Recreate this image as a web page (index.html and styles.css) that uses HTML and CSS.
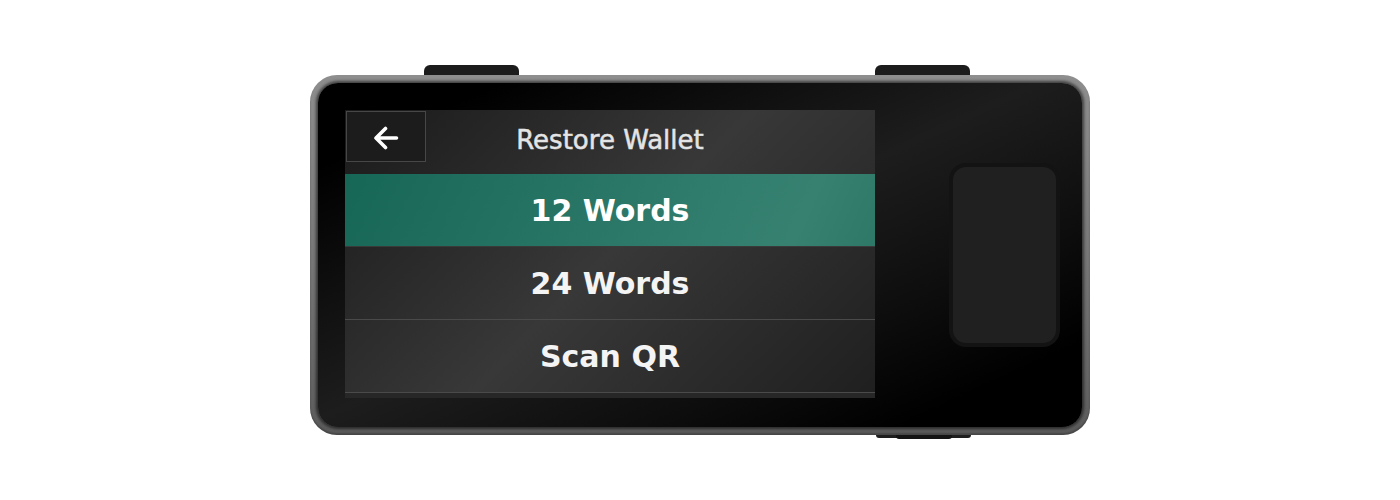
FILE: index.html
```html
<!DOCTYPE html>
<html>
<head>
<meta charset="utf-8">
<link rel="stylesheet" href="styles.css">
</head>
<body>
<div class="stage">
  <div class="device">
    <div class="top-keys">
      <div class="key"></div>
      <div class="key"></div>
    </div>
    <div class="shell">
      <div class="face">
        <div class="screen">
          <div class="header">
            <div class="back">
              <svg width="26" height="24" viewBox="0 0 26 24">
                <path d="M23.5 12 H4 M12.5 2.5 L3 12 L12.5 21.5" fill="none" stroke="#ffffff" stroke-width="3.6" stroke-linecap="round" stroke-linejoin="round"/>
              </svg>
            </div>
            <div class="title">Restore Wallet</div>
            <div></div>
          </div>
          <div class="row row-active">12 Words</div>
          <div class="row">24 Words</div>
          <div class="row">Scan QR</div>
          <div class="row-tail"></div>
        </div>
        <div class="pad"><div class="pad-inner"></div></div>
      </div>
    </div>
    <div class="bottom-keys">
      <div class="bump"><div class="bump-core"></div></div>
    </div>
  </div>
</div>
</body>
</html>
```

FILE: styles.css
```css
html, body {
  margin: 0;
  padding: 0;
  background: #ffffff;
}

.stage {
  width: 1400px;
  height: 500px;
  box-sizing: border-box;
  padding-top: 65px;
  display: flex;
  flex-direction: column;
  align-items: center;
  overflow: hidden;
}

.device {
  width: 780px;
  display: flex;
  flex-direction: column;
}

.top-keys {
  height: 10px;
  display: flex;
  padding-left: 114px;
  gap: 356px;
}

.key {
  width: 95px;
  height: 10px;
  background: #1c1c1c;
  border-radius: 6px 6px 0 0;
}

.shell {
  height: 360px;
  box-sizing: border-box;
  padding: 8px;
  border-radius: 27px;
  background: linear-gradient(180deg, #8e8e8e 0%, #7a7a7a 45%, #5c5c5c 100%);
  box-shadow: inset 0 -2px 2px rgba(0,0,0,0.25);
}

.face {
  height: 100%;
  box-sizing: border-box;
  border-radius: 20px;
  background: linear-gradient(155deg, #000000 12%, #1d1d1d 48%, #0e0e0e 70%, #000000 88%);
  box-shadow: 0 0 3px 2px rgba(0,0,0,0.55);
  padding: 27px 22px 0 27px;
  display: flex;
  align-items: flex-start;
}

.screen {
  width: 530px;
  height: 288px;
  display: flex;
  flex-direction: column;
  background: linear-gradient(135deg, #1a1a1a 0%, #383838 50%, #1f1f1f 100%);
}

.header {
  height: 64px;
  display: grid;
  grid-template-columns: 1fr auto 1fr;
  align-items: start;
}

.back {
  margin: 1px 0 0 1px;
  box-sizing: border-box;
  width: 80px;
  height: 51px;
  border: 1px solid #474747;
  background: #1c1c1c;
  display: flex;
  align-items: center;
  justify-content: center;
  padding-top: 3px;
}

.back svg {
  display: block;
}

.title {
  margin-top: 15px;
  font-family: "DejaVu Sans", "Noto Sans", sans-serif;
  font-size: 26px;
  line-height: 30px;
  color: #e4e4e4;
  -webkit-text-stroke: 0.5px #e4e4e4;
  white-space: nowrap;
}

.row {
  box-sizing: border-box;
  height: 73px;
  padding-top: 2px;
  border-bottom: 1px solid #4a4a4a;
  display: flex;
  align-items: center;
  justify-content: center;
  font-family: "DejaVu Sans", "Noto Sans", sans-serif;
  font-weight: bold;
  font-size: 30px;
  line-height: 70px;
  color: #f4f4f4;
}

.row-active {
  background: linear-gradient(115deg, #176756 0%, #247262 35%, #327e6e 70%, #368170 85%, #2e7868 100%);
  border-bottom-color: #3a3a3a;
  color: #ffffff;
}

.row-tail {
  height: 5px;
  background: #272727;
}

.pad {
  margin-left: auto;
  margin-top: 53px;
  width: 111px;
  height: 184px;
  box-sizing: border-box;
  border: 4px solid #131313;
  border-radius: 17px;
  background: #131313;
}

.pad-inner {
  height: 100%;
  border-radius: 13px;
  background: #202020;
}

.bottom-keys {
  height: 4px;
  display: flex;
  padding-left: 566px;
}

.bump {
  width: 95px;
  height: 3px;
  background: #1e1e1e;
  border-radius: 0 0 5px 5px;
  display: flex;
  justify-content: center;
}

.bump-core {
  width: 56px;
  height: 4px;
  background: #141414;
  border-radius: 0 0 3px 3px;
}
```
